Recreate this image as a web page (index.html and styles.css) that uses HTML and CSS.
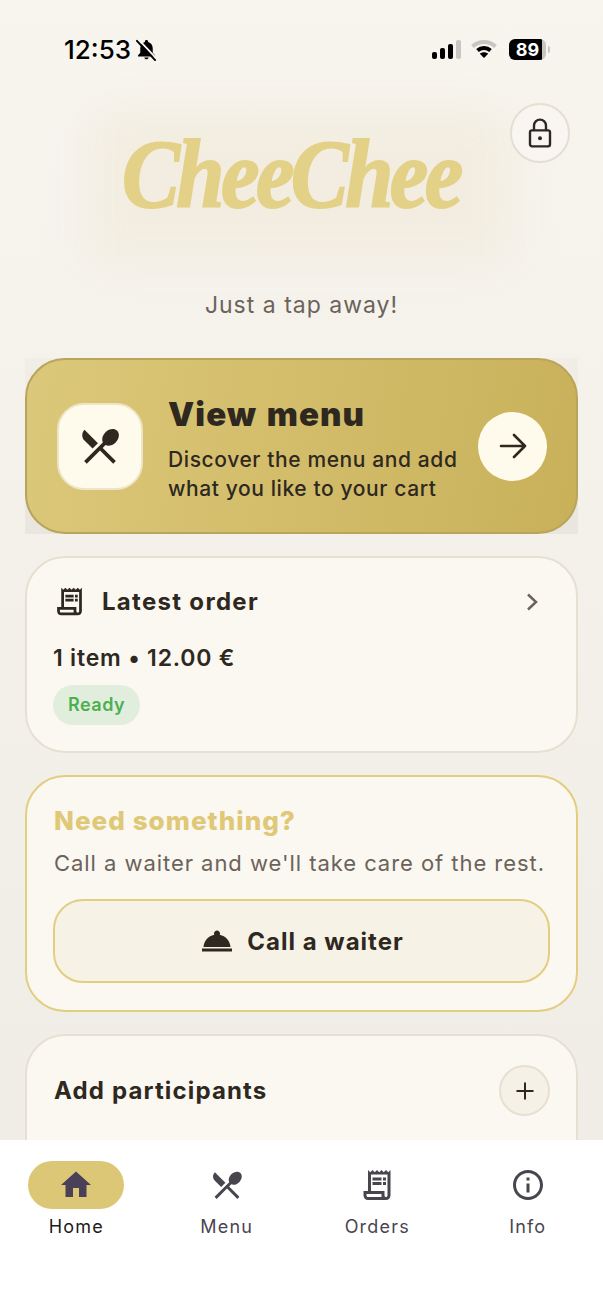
FILE: index.html
```html
<!DOCTYPE html>
<html lang="en">
<head>
    <meta charset="utf-8">
    <title>CheeChee</title>
    <link rel="stylesheet" href="styles.css">
</head>
<body>
    <div class="page">
        <div class="status-bar">
            <div class="status-left">
                <span class="time">12:53</span>
                <svg class="bell-off" viewBox="0 0 24 24"><path d="M12 2c-1 0-1.700.7-1.700 1.700v.5C7.200 5 5.500 7.600 5.500 10.800v4.700L3.200 18v1.200h17.600V18l-2.300-2.500v-4.700c0-3.200-1.700-5.800-4.800-6.600v-.5C13.700 2.700 13 2 12 2zM9.700 20.300c.2 1.100 1.200 1.900 2.300 1.900s2.100-.8 2.300-1.900z"/><path class="slash-gap" d="M3.500 1.500 22 21"/><path class="slash" d="M2 3l19 20"/></svg>
            </div>
            <div class="status-right">
                <div class="signal"><i class="s1"></i><i class="s2"></i><i class="s3"></i><i class="s4"></i></div>
                <svg class="wifi" viewBox="0 0 28 20"><path class="wifi-off" d="M2.500 7.500C9 1.500 19 1.500 25.500 7.500"/><path class="wifi-on" d="M7.500 11.500c3.800-3.300 9.200-3.300 13 0"/><path d="M14 19l-4.200-4.200c2.400-2 6-2 8.400 0z"/></svg>
                <div class="battery"><span class="battery-level">89</span></div>
            </div>
        </div>

        <header class="hero">
            <button class="lock-btn" type="button">
                <svg viewBox="0 0 24 24" width="32" height="32"><rect x="4.500" y="10" width="15" height="12" rx="1.500"/><path d="M7.500 10V6.500a4.500 4.500 0 0 1 9 0V10"/><circle class="lock-dot" cx="12" cy="16" r="1.500"/></svg>
            </button>
            <div class="logo"><span class="logo-text">CheeChee</span></div>
            <p class="tagline">Just a tap away!</p>
        </header>

        <main class="cards">
            <div class="menu-wrap">
                <section class="menu-card">
                    <div class="menu-icon">
                        <svg viewBox="0 0 24 24" width="46" height="46"><path d="M8.100 13.340l2.830-2.830L3.910 3.500c-1.560 1.560-1.560 4.090 0 5.660l4.190 4.180zm6.780-1.810c1.530.71 3.680.21 5.270-1.380 1.910-1.910 2.280-4.650.81-6.120-1.460-1.460-4.200-1.100-6.120.81-1.590 1.590-2.090 3.740-1.380 5.270L3.700 19.870l1.410 1.410L12 14.410l6.880 6.880 1.410-1.410L13.410 13l1.470-1.470z"/></svg>
                    </div>
                    <div class="menu-text">
                        <h2>View menu</h2>
                        <p>Discover the menu and add what you like to your cart</p>
                    </div>
                    <div class="menu-arrow">
                        <svg viewBox="0 0 28 28" width="28" height="28"><path d="M2 14h24M15 3l11 11-11 11"/></svg>
                    </div>
                </section>
            </div>

            <section class="card order-card">
                <div class="order-head">
                    <svg viewBox="0 0 24 24" width="33" height="33"><path d="M19.500 3.500 18 2l-1.500 1.500L15 2l-1.500 1.500L12 2l-1.500 1.500L9 2 7.500 3.500 6 2v14H3v3c0 1.660 1.340 3 3 3h12c1.660 0 3-1.340 3-3V2l-1.500 1.500zM15 20H6c-.55 0-1-.45-1-1v-1h10v2zm4-1c0 .55-.45 1-1 1s-1-.45-1-1v-3H8V5h11v14z"/><path d="M9 7h6v2H9zM16 7h2v2h-2zM9 10h6v2H9zM16 10h2v2h-2z"/></svg>
                    <h3>Latest order</h3>
                    <svg class="chevron" viewBox="0 0 12 18" width="12" height="18"><path d="M2 1.500 10 9l-8 7.500"/></svg>
                </div>
                <div class="order-sum">1 item • 12.00 €</div>
                <span class="pill">Ready</span>
            </section>

            <section class="card waiter-card">
                <h3>Need something?</h3>
                <p>Call a waiter and we'll take care of the rest.</p>
                <button class="waiter-btn" type="button">
                    <svg viewBox="0 0 24 24" width="36" height="36"><path d="M2 17h20v2H2zm11.840-9.210c.1-.24.16-.51.16-.79 0-1.100-.9-2-2-2s-2 .9-2 2c0 .28.06.55.16.79C6.250 8.600 3.270 11.930 3 16h18c-.27-4.070-3.250-7.400-7.160-8.210z"/></svg>
                    <span>Call a waiter</span>
                </button>
            </section>

            <section class="card people-card">
                <div class="people-head">
                    <h3>Add participants</h3>
                    <button class="plus-btn" type="button">
                        <svg viewBox="0 0 20 20" width="20" height="20"><path d="M10 1.500v17M1.500 10h17"/></svg>
                    </button>
                </div>
                <div class="people-row"></div>
            </section>
        </main>
    </div>

    <nav class="tabbar">
        <div class="tab active">
            <span class="tab-icon"><svg viewBox="0 0 24 24" width="36" height="36"><path d="M10 20v-6h4v6h5v-8h3L12 3 2 12h3v8z"/></svg></span>
            <span class="tab-label">Home</span>
        </div>
        <div class="tab">
            <span class="tab-icon"><svg viewBox="0 0 24 24" width="36" height="36"><path d="M8.100 13.340l2.830-2.830L3.910 3.500c-1.560 1.560-1.560 4.090 0 5.660l4.190 4.180zm6.780-1.810c1.530.71 3.680.21 5.270-1.380 1.910-1.910 2.280-4.650.81-6.120-1.460-1.460-4.200-1.100-6.120.81-1.590 1.590-2.090 3.740-1.380 5.270L3.700 19.870l1.410 1.410L12 14.410l6.880 6.880 1.410-1.410L13.410 13l1.470-1.470z"/></svg></span>
            <span class="tab-label">Menu</span>
        </div>
        <div class="tab">
            <span class="tab-icon"><svg viewBox="0 0 24 24" width="36" height="36"><path d="M19.500 3.500 18 2l-1.500 1.500L15 2l-1.500 1.500L12 2l-1.500 1.500L9 2 7.500 3.500 6 2v14H3v3c0 1.660 1.340 3 3 3h12c1.660 0 3-1.340 3-3V2l-1.500 1.500zM15 20H6c-.55 0-1-.45-1-1v-1h10v2zm4-1c0 .55-.45 1-1 1s-1-.45-1-1v-3H8V5h11v14z"/><path d="M9 7h6v2H9zM16 7h2v2h-2zM9 10h6v2H9zM16 10h2v2h-2z"/></svg></span>
            <span class="tab-label">Orders</span>
        </div>
        <div class="tab">
            <span class="tab-icon"><svg viewBox="0 0 24 24" width="36" height="36"><path d="M11 7h2v2h-2zm0 4h2v6h-2zm1-9C6.480 2 2 6.480 2 12s4.480 10 10 10 10-4.480 10-10S17.520 2 12 2zm0 18c-4.410 0-8-3.590-8-8s3.590-8 8-8 8 3.590 8 8-3.590 8-8 8z"/></svg></span>
            <span class="tab-label">Info</span>
        </div>
    </nav>
</body>
</html>
```

FILE: styles.css
```css
* {
    box-sizing: border-box;
}

html, body {
    height: 100%;
}

body {
    margin: 0;
    position: relative;
    overflow: hidden;
    font-family: Inter, "Liberation Sans", sans-serif;
    color: #2e2820;
    background: linear-gradient(180deg, #f8f5ef 0%, #f4f1eb 40%, #efece6 100%);
}

h2, h3, p {
    margin: 0;
}

button {
    font-family: inherit;
    color: inherit;
    padding: 0;
    cursor: pointer;
}

/* status bar */
.status-bar {
    height: 98px;
    padding: 0 57px 0 64px;
    display: flex;
    align-items: center;
    justify-content: space-between;
    color: #000;
}

.status-left {
    display: flex;
    align-items: center;
    gap: 4px;
}

.time {
    font-size: 26px;
    font-weight: 500;
    letter-spacing: 0;
}

.bell-off {
    width: 23px;
    height: 23px;
    fill: #000;
}

.bell-off .slash-gap {
    stroke: #f8f5ef;
    stroke-width: 2;
}

.bell-off .slash {
    stroke: #000;
    stroke-width: 2;
    stroke-linecap: round;
}

.status-right {
    display: flex;
    align-items: center;
    gap: 11px;
}

.signal {
    display: flex;
    align-items: flex-end;
    gap: 3px;
    height: 19px;
}

.signal i {
    width: 5px;
    border-radius: 2px;
    background: #000;
}

.signal .s1 { height: 7px; }
.signal .s2 { height: 11px; }
.signal .s3 { height: 15px; }
.signal .s4 { height: 19px; background: #c8c6c2; }

.wifi {
    width: 28px;
    height: 20px;
    margin-left: -2px;
    fill: #000;
}

.wifi path {
    fill: none;
    stroke-width: 4;
}

.wifi .wifi-off { stroke: #c8c6c2; }
.wifi .wifi-on { stroke: #000; }
.wifi path:last-child { fill: #000; stroke: none; }

.battery {
    position: relative;
    width: 37px;
    height: 21px;
    border-radius: 6px;
    background: linear-gradient(90deg, #000 89%, #c8c6c2 89%);
    display: flex;
    align-items: center;
    justify-content: center;
}

.battery::after {
    content: "";
    position: absolute;
    right: -4px;
    top: 7px;
    width: 2px;
    height: 7px;
    border-radius: 0 2px 2px 0;
    background: #c8c6c2;
}

.battery-level {
    font-size: 18px;
    font-weight: 700;
    color: #fff;
}

/* logo area */
.hero {
    position: relative;
    height: 260px;
    text-align: center;
}

.hero::before {
    content: "";
    position: absolute;
    top: 14px;
    left: 90px;
    width: 420px;
    height: 150px;
    background: #f2ede0;
    filter: blur(22px);
}

.lock-btn {
    position: absolute;
    top: 5px;
    right: 33px;
    width: 60px;
    height: 60px;
    border-radius: 50%;
    border: 2px solid #e4dfd2;
    background: #f9f6f1;
    display: flex;
    align-items: center;
    justify-content: center;
}

.lock-btn svg {
    fill: none;
    stroke: #2e2820;
    stroke-width: 1.800;
}

.lock-btn .lock-dot {
    fill: #2e2820;
    stroke: none;
}

.logo {
    position: relative;
    padding: 23px 22px 0 0;
    height: 192px;
    font-family: "Liberation Serif", serif;
    font-size: 98px;
    line-height: 106px;
    font-weight: 700;
    font-style: italic;
    letter-spacing: -4px;
    color: #e3d188;
}

.logo-text {
    display: inline-block;
    transform: scaleX(0.885);
    -webkit-text-stroke: 2px #e3d188;
}

.tagline {
    position: relative;
    font-size: 23px;
    line-height: 30px;
    letter-spacing: 1px;
    color: #6b635a;
}

/* cards */
.cards {
    padding: 0 25px;
    display: flex;
    flex-direction: column;
    gap: 22px;
}

.menu-wrap {
    background: linear-gradient(180deg, #f1eee8 0%, #e9e6df 100%);
}

.menu-card {
    height: 176px;
    padding: 0 29px 0 30px;
    border: 2px solid #b9a45c;
    border-radius: 40px;
    background: linear-gradient(100deg, #dcc87a 0%, #c9b15a 100%);
    display: flex;
    align-items: center;
}

.menu-icon {
    flex: none;
    width: 86px;
    height: 87px;
    border-radius: 27px;
    border: 2px solid #eee5c8;
    background: #fffbec;
    display: flex;
    align-items: center;
    justify-content: center;
    fill: #2e2820;
}

.menu-text {
    flex: 1;
    padding: 5px 0 0 25px;
}

.menu-text h2 {
    font-size: 33px;
    line-height: 40px;
    font-weight: 900;
    letter-spacing: 1.100px;
    word-spacing: 2px;
    margin-bottom: 11px;
}

.menu-text p {
    font-size: 21px;
    line-height: 29px;
    font-weight: 500;
    letter-spacing: 0.600px;
}

.menu-arrow {
    flex: none;
    width: 69px;
    height: 69px;
    border-radius: 50%;
    background: #fffbec;
    display: flex;
    align-items: center;
    justify-content: center;
}

.menu-arrow svg {
    fill: none;
    stroke: #2e2820;
    stroke-width: 2.600;
    stroke-linecap: round;
    stroke-linejoin: round;
}

.card {
    border: 2px solid #e6e0d2;
    border-radius: 40px;
    background: #fbf8f2;
    padding: 0 26px;
}

.order-card {
    height: 197px;
    padding-top: 27px;
}

.order-head {
    display: flex;
    align-items: center;
    gap: 16px;
    height: 33px;
    padding-right: 12px;
    fill: #2e2820;
}

.order-head h3 {
    flex: 1;
    font-size: 24px;
    font-weight: 700;
    letter-spacing: 1.300px;
}

.chevron {
    fill: none;
    stroke: #6b635a;
    stroke-width: 2.500;
}

.order-sum {
    margin-top: 25px;
    font-size: 23px;
    line-height: 30px;
    font-weight: 600;
    letter-spacing: 0.800px;
}

.pill {
    display: inline-block;
    margin-top: 12px;
    height: 40px;
    padding: 0 15px;
    border-radius: 20px;
    background: #e2eedd;
    color: #4cb050;
    font-size: 18px;
    line-height: 40px;
    font-weight: 600;
    letter-spacing: 0.500px;
}

.waiter-card {
    height: 237px;
    padding-top: 28px;
    border-color: #e2cd80;
}

.waiter-card h3 {
    padding-left: 1px;
    font-size: 26px;
    line-height: 32px;
    font-weight: 800;
    letter-spacing: 1.050px;
    color: #dfc877;
}

.waiter-card p {
    margin-top: 11px;
    padding-left: 1px;
    font-size: 22px;
    line-height: 30px;
    letter-spacing: 0.950px;
    white-space: nowrap;
    color: #6b635a;
}

.waiter-btn {
    margin-top: 21px;
    width: 100%;
    height: 84px;
    border: 2px solid #e2cd80;
    border-radius: 30px;
    background: #f7f2e6;
    display: flex;
    align-items: center;
    justify-content: center;
    gap: 12px;
    font-size: 24px;
    font-weight: 700;
    letter-spacing: 1px;
    fill: #2e2820;
}

.people-card {
    height: 200px;
    padding-top: 29px;
}

.people-head {
    display: flex;
    align-items: center;
    justify-content: space-between;
}

.people-head h3 {
    padding-left: 1px;
    font-size: 24px;
    font-weight: 700;
    letter-spacing: 1.150px;
}

.plus-btn {
    width: 51px;
    height: 51px;
    border-radius: 50%;
    border: 2px solid #e6e0d2;
    background: #f5f1e7;
    display: flex;
    align-items: center;
    justify-content: center;
}

.plus-btn svg {
    fill: none;
    stroke: #2e2820;
    stroke-width: 2;
}

.people-row {
    margin: 24px 0 0 25px;
    width: 158px;
    height: 40px;
    border-top: 1px solid #eee9dc;
}

/* bottom tabs */
.tabbar {
    position: absolute;
    left: 0;
    right: 0;
    bottom: 0;
    height: 171px;
    padding: 21px 0 0 1px;
    background: #fff;
    display: grid;
    grid-template-columns: repeat(4, 1fr);
}

.tab {
    display: flex;
    flex-direction: column;
    align-items: center;
    fill: #49454f;
    color: #49454f;
}

.tab-icon {
    width: 96px;
    height: 48px;
    border-radius: 24px;
    display: flex;
    align-items: center;
    justify-content: center;
}

.tab-label {
    margin-top: 6px;
    font-size: 18px;
    line-height: 24px;
    font-weight: 400;
    letter-spacing: 1.200px;
}

.tab.active .tab-icon {
    background: #dcc777;
    fill: #4a4058;
}

.tab.active .tab-label {
    color: #1d1b20;
}
```
